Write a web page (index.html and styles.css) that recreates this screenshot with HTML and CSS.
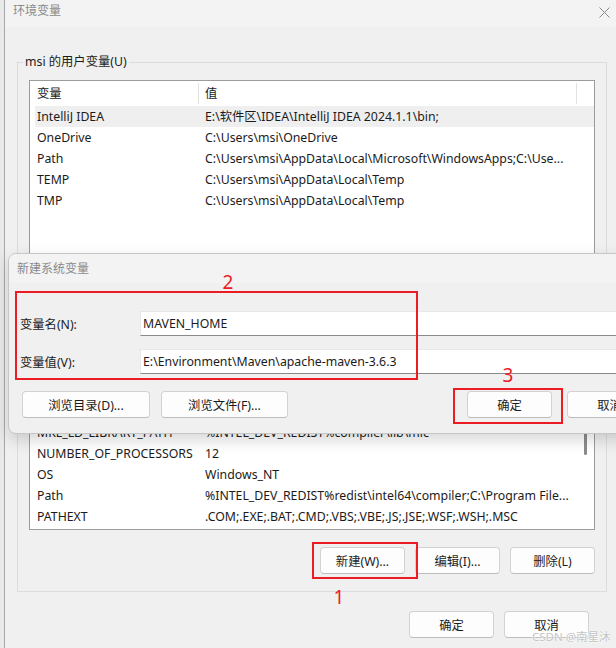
FILE: index.html
```html
<!DOCTYPE html>
<html lang="zh-CN">
<head>
  <meta charset="UTF-8">
  <meta name="viewport" content="width=device-width, initial-scale=1.0">
  <link rel="stylesheet" href="styles.css">
</head>
<body>

<div class="window">
  <div class="titlebar">
    <span class="title">环境变量</span>
    <svg class="close" width="11" height="11" viewBox="0 0 11 11">
      <path d="M0.5 0.5 L10.5 10.5 M10.5 0.5 L0.5 10.5" stroke="#8a8a8a" stroke-width="1" fill="none"/>
    </svg>
  </div>

  <div class="content">
    <fieldset class="group">
      <legend>msi 的用户变量(U)</legend>
      <div class="list user-list">
        <div class="list-main">
          <div class="list-head">
            <div class="cell">变量</div>
            <div class="cell">值</div>
          </div>
          <div class="row selected"><div class="cell">IntelliJ IDEA</div><div class="cell">E:\软件区\IDEA\IntelliJ IDEA 2024.1.1\bin;</div></div>
          <div class="row"><div class="cell">OneDrive</div><div class="cell">C:\Users\msi\OneDrive</div></div>
          <div class="row"><div class="cell">Path</div><div class="cell">C:\Users\msi\AppData\Local\Microsoft\WindowsApps;C:\Use...</div></div>
          <div class="row"><div class="cell">TEMP</div><div class="cell">C:\Users\msi\AppData\Local\Temp</div></div>
          <div class="row"><div class="cell">TMP</div><div class="cell">C:\Users\msi\AppData\Local\Temp</div></div>
        </div>
      </div>
      <div class="btn-row">
        <div class="btn">新建(N)...</div>
        <div class="btn">编辑(E)...</div>
        <div class="btn">删除(D)</div>
      </div>
    </fieldset>

    <fieldset class="group sys-group">
      <legend>系统变量(S)</legend>
      <div class="list sys-list">
        <div class="list-main">
          <div class="list-head">
            <div class="cell">变量</div>
            <div class="cell">值</div>
          </div>
          <div class="list-rows">
            <div class="rows-scrolled">
              <div class="row"><div class="cell">DriverData</div><div class="cell">C:\Windows\System32\Drivers\DriverData</div></div>
              <div class="row"><div class="cell">INTEL_DEV_REDIST</div><div class="cell">C:\Program Files (x86)\Common Files\Intel\Shared Libraries\</div></div>
              <div class="row"><div class="cell">MKL_LD_LIBRARY_PATH</div><div class="cell">%INTEL_DEV_REDIST%compiler\lib\mic</div></div>
              <div class="row"><div class="cell">NUMBER_OF_PROCESSORS</div><div class="cell">12</div></div>
              <div class="row"><div class="cell">OS</div><div class="cell">Windows_NT</div></div>
              <div class="row"><div class="cell">Path</div><div class="cell">%INTEL_DEV_REDIST%redist\intel64\compiler;C:\Program File...</div></div>
              <div class="row"><div class="cell">PATHEXT</div><div class="cell">.COM;.EXE;.BAT;.CMD;.VBS;.VBE;.JS;.JSE;.WSF;.WSH;.MSC</div></div>
              <div class="row"><div class="cell">PROCESSOR_ARCHITECTURE</div><div class="cell">AMD64</div></div>
            </div>
          </div>
        </div>
        <div class="scroll-track"><div class="scroll-thumb"></div></div>
      </div>
      <div class="btn-row">
        <div class="btn">新建(W)...</div>
        <div class="btn">编辑(I)...</div>
        <div class="btn">删除(L)</div>
      </div>
    </fieldset>

    <div class="footer">
      <div class="btn">确定</div>
      <div class="btn">取消</div>
    </div>
  </div>
</div>

<div class="dialog">
  <div class="dlg-title">新建系统变量</div>
  <div class="dlg-body">
    <div class="field">
      <label>变量名(N):</label>
      <input type="text" value="MAVEN_HOME">
    </div>
    <div class="field">
      <label>变量值(V):</label>
      <input type="text" value="E:\Environment\Maven\apache-maven-3.6.3">
    </div>
    <div class="dlg-buttons">
      <div class="btn browse-dir">浏览目录(D)...</div>
      <div class="btn browse-file">浏览文件(F)...</div>
      <div class="spacer"></div>
      <div class="btn">确定</div>
      <div class="btn">取消</div>
    </div>
  </div>
</div>

<!-- red annotations drawn over the screenshot -->
<div class="mark mark-1"></div>
<div class="num num-1">1</div>
<div class="mark mark-2"></div>
<div class="num num-2">2</div>
<div class="mark mark-3"></div>
<div class="num num-3">3</div>

<div class="watermark">CSDN @南星沐</div>

</body>
</html>
```

FILE: styles.css
```css
* {
  box-sizing: border-box;
}
html, body {
  margin: 0;
}
body {
  width: 616px;
  height: 648px;
  overflow: hidden;
  position: relative;
  background: #e9e9e9;
  font-family: "Noto Sans", "Noto Sans CJK SC", sans-serif;
  font-size: 12.3px;
  color: #1b1b1b;
}
.window {
  margin-left: 4px;
  width: 616px;
  height: 648px;
  background: #f0f0f0;
  border-left: 1px solid #a8a8a8;
}
.titlebar {
  height: 27px;
  background: #f3f3f3;
  display: flex;
  align-items: flex-start;
  justify-content: space-between;
  padding: 2px 10px 0 8px;
}
.title {
  font-size: 12px;
  line-height: 18px;
  color: #8a8a8a;
}
.close {
  margin-top: 5px;
}
.content {
  padding: 26px 13px 0 12px;
}
.group {
  margin: 0;
  min-width: 0;
  padding: 9px 11px 17px 11px;
  border: 1px solid #dcdcdc;
}
.group legend {
  margin-left: -6px;
  padding: 0 2px;
  line-height: 18px;
}
.sys-group {
  margin-top: 6px;
}
.list {
  display: flex;
  background: #ffffff;
  border: 1px solid #9c9c9c;
}
.user-list {
  height: 182px;
}
.sys-list {
  height: 173px;
}
.list-main {
  flex: 1;
  min-width: 0;
  padding-left: 5px;
}
.list-head,
.row {
  display: grid;
  grid-template-columns: 164px 378px;
}
.list-head {
  height: 25px;
  align-items: center;
}
.list-head .cell {
  height: 21px;
  line-height: 21px;
  border-right: 1px solid #e3e3e3;
}
.cell {
  white-space: nowrap;
  overflow: hidden;
  padding-left: 2px;
}
.cell + .cell {
  padding-left: 6px;
}
.row {
  height: 21px;
  line-height: 21px;
}
.row.selected {
  background: #efefef;
}
.list-rows {
  height: 146px;
  overflow: hidden;
}
.rows-scrolled {
  margin-top: -3px;
}
.scroll-track {
  width: 17px;
  flex: none;
}
.scroll-thumb {
  margin: 42px 0 0 7px;
  width: 3px;
  height: 55px;
  border-radius: 2px;
  background: #8b8b8b;
}
.btn-row {
  display: flex;
  justify-content: flex-end;
  gap: 10px;
  margin-top: 17px;
}
.btn {
  width: 85px;
  height: 27px;
  display: flex;
  align-items: center;
  justify-content: center;
  background: #fdfdfd;
  border: 1px solid #d2d2d2;
  border-bottom-color: #bdbdbd;
  border-radius: 4px;
  white-space: nowrap;
}
.footer {
  display: flex;
  justify-content: flex-end;
  gap: 10px;
  margin-top: 19px;
  padding-right: 18px;
}

/* the "new system variable" dialog lies over the main window */
.dialog {
  position: absolute;
  left: 8px;
  top: 253px;
  width: 658px;
  height: 181px;
  background: #f0f0f0;
  border: 1px solid #c6c6c6;
  border-radius: 8px;
  box-shadow: 0 6px 16px rgba(0, 0, 0, 0.16);
  overflow: hidden;
}
.dlg-title {
  height: 29px;
  line-height: 29px;
  padding-left: 8px;
  background: #f3f3f3;
  font-size: 12px;
  color: #8a8a8a;
}
.dlg-body {
  padding: 28px 13px 0 11px;
}
.field {
  display: flex;
  align-items: center;
  height: 25px;
}
.field + .field {
  margin-top: 13px;
}
.field label {
  width: 120px;
  flex: none;
}
.field input {
  flex: 1;
  height: 25px;
  margin: 0;
  padding: 0 2px;
  font: inherit;
  color: #1b1b1b;
  background: #ffffff;
  border: 1px solid #e8e8e8;
  border-bottom-color: #8a8a8a;
  outline: none;
}
.dlg-buttons {
  display: flex;
  gap: 15px;
  margin-top: 17px;
  padding-left: 2px;
}
.dlg-buttons .browse-dir {
  width: 128px;
}
.dlg-buttons .browse-file {
  width: 127px;
  margin-left: -4px;
}
.spacer {
  flex: 1;
}

.mark {
  position: absolute;
  border: 2px solid #ec1c24;
}
.mark-1 {
  left: 312px;
  top: 542px;
  width: 106px;
  height: 37px;
}
.mark-2 {
  left: 15px;
  top: 291px;
  width: 403px;
  height: 89px;
}
.mark-3 {
  left: 453px;
  top: 388px;
  width: 110px;
  height: 36px;
}
.num {
  position: absolute;
  width: 20px;
  height: 22px;
  line-height: 22px;
  text-align: center;
  color: #ec1c24;
  font-size: 19px;
}
.num-1 {
  left: 329px;
  top: 586px;
}
.num-2 {
  left: 218px;
  top: 271px;
}
.num-3 {
  left: 498px;
  top: 364px;
}
.watermark {
  position: absolute;
  left: 532px;
  top: 629px;
  line-height: 16px;
  font-size: 11.5px;
  color: #c4c4c4;
  text-shadow: 0 0 2px #ffffff, 0 0 2px #ffffff;
  white-space: nowrap;
}
```
